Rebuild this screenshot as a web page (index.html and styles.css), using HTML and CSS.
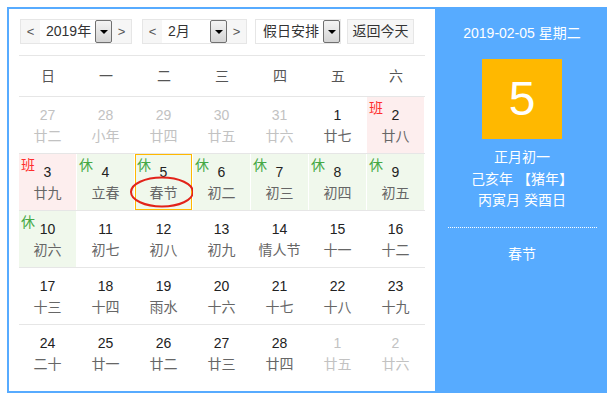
FILE: index.html
```html
<!DOCTYPE html>
<html lang="zh-CN">
<head>
<meta charset="utf-8">
<title>万年历</title>
<link rel="stylesheet" href="styles.css">
</head>
<body>
<div class="cal">
  <div class="main">
    <div class="controls">
      <div class="group g-year">
        <span class="btn nav">&lt;</span>
        <span class="sel year"><span class="sel-text">2019年</span><span class="drop"><i></i></span></span>
        <span class="btn nav">&gt;</span>
      </div>
      <div class="group g-month">
        <span class="btn nav">&lt;</span>
        <span class="sel month"><span class="sel-text">2月</span><span class="drop"><i></i></span></span>
        <span class="btn nav">&gt;</span>
      </div>
      <div class="group g-holiday">
        <span class="sel holiday"><span class="sel-text">假日安排</span><span class="drop"><i></i></span></span>
      </div>
      <div class="group today"><span class="btn">返回今天</span></div>
    </div>

    <div class="grid">
      <div class="week head">
        <div class="wd">日</div><div class="wd">一</div><div class="wd">二</div><div class="wd">三</div><div class="wd">四</div><div class="wd">五</div><div class="wd">六</div>
      </div>
      <div class="week">
        <div class="day other"><div class="num">27</div><div class="lunar">廿二</div></div>
        <div class="day other"><div class="num">28</div><div class="lunar">小年</div></div>
        <div class="day other"><div class="num">29</div><div class="lunar">廿四</div></div>
        <div class="day other"><div class="num">30</div><div class="lunar">廿五</div></div>
        <div class="day other"><div class="num">31</div><div class="lunar">廿六</div></div>
        <div class="day"><div class="num">1</div><div class="lunar">廿七</div></div>
        <div class="day work"><span class="tag">班</span><div class="num">2</div><div class="lunar">廿八</div></div>
      </div>
      <div class="week">
        <div class="day work"><span class="tag">班</span><div class="num">3</div><div class="lunar">廿九</div></div>
        <div class="day rest"><span class="tag">休</span><div class="num">4</div><div class="lunar">立春</div></div>
        <div class="day rest active"><span class="tag">休</span><div class="num">5</div><div class="lunar">春节</div>
          <svg class="circle" width="66" height="34" viewBox="0 0 66 34"><ellipse cx="33" cy="16" rx="31" ry="14.5" fill="none" stroke="#e2231a" stroke-width="2"/></svg>
        </div>
        <div class="day rest"><span class="tag">休</span><div class="num">6</div><div class="lunar">初二</div></div>
        <div class="day rest"><span class="tag">休</span><div class="num">7</div><div class="lunar">初三</div></div>
        <div class="day rest"><span class="tag">休</span><div class="num">8</div><div class="lunar">初四</div></div>
        <div class="day rest"><span class="tag">休</span><div class="num">9</div><div class="lunar">初五</div></div>
      </div>
      <div class="week">
        <div class="day rest"><span class="tag">休</span><div class="num">10</div><div class="lunar">初六</div></div>
        <div class="day"><div class="num">11</div><div class="lunar">初七</div></div>
        <div class="day"><div class="num">12</div><div class="lunar">初八</div></div>
        <div class="day"><div class="num">13</div><div class="lunar">初九</div></div>
        <div class="day"><div class="num">14</div><div class="lunar">情人节</div></div>
        <div class="day"><div class="num">15</div><div class="lunar">十一</div></div>
        <div class="day"><div class="num">16</div><div class="lunar">十二</div></div>
      </div>
      <div class="week">
        <div class="day"><div class="num">17</div><div class="lunar">十三</div></div>
        <div class="day"><div class="num">18</div><div class="lunar">十四</div></div>
        <div class="day"><div class="num">19</div><div class="lunar">雨水</div></div>
        <div class="day"><div class="num">20</div><div class="lunar">十六</div></div>
        <div class="day"><div class="num">21</div><div class="lunar">十七</div></div>
        <div class="day"><div class="num">22</div><div class="lunar">十八</div></div>
        <div class="day"><div class="num">23</div><div class="lunar">十九</div></div>
      </div>
      <div class="week">
        <div class="day"><div class="num">24</div><div class="lunar">二十</div></div>
        <div class="day"><div class="num">25</div><div class="lunar">廿一</div></div>
        <div class="day"><div class="num">26</div><div class="lunar">廿二</div></div>
        <div class="day"><div class="num">27</div><div class="lunar">廿三</div></div>
        <div class="day"><div class="num">28</div><div class="lunar">廿四</div></div>
        <div class="day other"><div class="num">1</div><div class="lunar">廿五</div></div>
        <div class="day other"><div class="num">2</div><div class="lunar">廿六</div></div>
      </div>
    </div>
  </div>

  <div class="side">
    <div class="side-date">2019-02-05 星期二</div>
    <div class="big-day">5</div>
    <div class="side-lunar">
      <div>正月初一</div>
      <div>己亥年 【猪年】</div>
      <div>丙寅月 癸酉日</div>
    </div>
    <div class="side-sep"></div>
    <div class="side-fest">春节</div>
  </div>
</div>
</body>
</html>
```

FILE: styles.css
```css
* { box-sizing: border-box; }
html, body { margin: 0; padding: 0; background: #fff; }
body {
  font-family: "Liberation Sans", "Noto Sans CJK SC", sans-serif;
  font-size: 14px;
  color: #333;
}
.cal {
  margin: 7px 0 0 7px;
  width: 600px;
  height: 386px;
  border: 2px solid #57abff;
  display: flex;
}
.main {
  width: 426px;
  padding: 10px 10px 0 10px;
}
.controls {
  display: flex;
  height: 25px;
  margin: 0 0 11px 1px;
}
.group {
  display: flex;
  height: 25px;
  border: 1px solid #e6e6e6;
}
.g-year { margin-right: 10px; }
.g-month { margin-right: 8px; }
.g-holiday { margin-right: 6px; }
.btn {
  display: flex;
  align-items: center;
  justify-content: center;
  background: #f6f6f6;
  color: #333;
  line-height: 23px;
  height: 23px;
}
.nav { width: 19px; font-size: 13px; color: #555; }
.today .btn { width: 65px; font-size: 14px; color: #333; }
.sel {
  display: flex;
  align-items: center;
  background: #fff;
  height: 23px;
}
.sel-text { padding-left: 6px; flex: 1; line-height: 23px; white-space: nowrap; }
.year { width: 72px; }
.month { width: 65px; }
.holiday { width: 84px; }
.holiday .sel-text { padding-left: 7px; }
.drop {
  width: 17px;
  height: 23px;
  border: 1px solid #707070;
  border-radius: 2px;
  background: linear-gradient(#f4f4f4, #d4d4d4);
  display: flex;
  align-items: center;
  justify-content: center;
}
.drop i {
  width: 0;
  height: 0;
  border-left: 4px solid transparent;
  border-right: 4px solid transparent;
  border-top: 4px solid #000;
}
.grid { width: 406px; }
.week {
  display: grid;
  grid-template-columns: repeat(7, 58px);
  border-top: 1px solid #e6e6e6;
}
.week.head { height: 41px; }
.wd {
  text-align: center;
  line-height: 40px;
  color: #555;
}
.day {
  position: relative;
  height: 56px;
  border-right: 1px solid transparent;
  background-clip: padding-box;
  text-align: center;
  padding-top: 8px;
}
.num { line-height: 20px; color: #222; }
.lunar { line-height: 22px; color: #666; }
.other .num, .other .lunar { color: #c2c2c2; }
.work { background-color: #fdeeee; }
.rest { background-color: #f0f8ec; }
.tag {
  position: absolute;
  left: 2px;
  top: 2px;
  line-height: 18px;
  font-size: 14px;
}
.work .tag { color: #ff2d2d; }
.rest .tag { color: #45a845; }
.active { box-shadow: inset 0 0 0 1px #ffb800; }
.circle {
  position: absolute;
  left: -6px;
  top: 22px;
  overflow: visible;
}
.side {
  flex: 1;
  background: #57abff;
  color: #fff;
  padding-left: 4px;
  display: flex;
  flex-direction: column;
  align-items: center;
}
.side-date {
  margin-top: 14px;
  line-height: 20px;
  font-size: 14px;
}
.big-day {
  margin-top: 16px;
  width: 80px;
  height: 80px;
  background: #ffb800;
  color: #fff;
  font-size: 48px;
  line-height: 80px;
  text-align: center;
}
.side-lunar {
  margin-top: 8px;
  line-height: 21.5px;
  text-align: center;
  font-size: 14px;
}
.side-sep {
  margin-top: 15px;
  width: 149px;
  border-top: 1px dotted #fff;
}
.side-fest {
  margin-top: 16px;
  line-height: 20px;
}
```
